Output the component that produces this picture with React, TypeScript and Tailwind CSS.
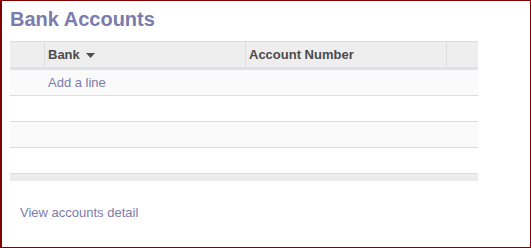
import React from 'react';

const font = { fontFamily: '"Liberation Sans", Arial, sans-serif' };

const App: React.FC = () => {
  const rows = ['bg-[#fafafa]', 'bg-white', 'bg-[#fafafa]', 'bg-white'];

  return (
    <div
      style={font}
      className="w-[531px] h-[248px] box-border border border-l-2 border-[#800000] bg-white"
    >
      <h1 className="pl-[8px] pt-[7px] h-[40px] text-[20px] leading-[22px] font-bold text-[#7c7bad]">
        Bank Accounts
      </h1>

      <div className="ml-[8px] w-[468px]">
        {/* header */}
        <div className="flex h-[29px] border-t border-[#dddddd] border-b-[3px] border-b-[#dee1e5] bg-[#eeeeee] text-[13px] font-bold text-[#4c4c4c]">
          <div className="w-[35px] border-r border-[#dddddd]" />
          <div className="w-[201px] flex items-center gap-[6px] pl-[3px] border-r border-[#dddddd]">
            <span>Bank</span>
            <svg width="9" height="5" viewBox="0 0 9 5" className="mt-[1px]">
              <path d="M0 0h9L4.5 5z" fill="#4c4c4c" />
            </svg>
          </div>
          <div className="w-[201px] flex items-center pl-[3px] border-r border-[#dddddd]">
            Account Number
          </div>
          <div className="flex-1" />
        </div>

        {/* rows */}
        {rows.map((bg, i) => (
          <div
            key={i}
            className={`h-[26px] border-b border-[#dddddd] ${bg} flex items-center pl-[38px] text-[13px] text-[#7c7bad]`}
          >
            {i === 0 ? 'Add a line' : null}
          </div>
        ))}

        {/* footer */}
        <div className="h-[7px] bg-[#ececec]" />
      </div>

      <div className="pl-[18px] pt-[24px] text-[13px] leading-[16px] text-[#7c7bad]">
        View accounts detail
      </div>
    </div>
  );
};

export default App;
